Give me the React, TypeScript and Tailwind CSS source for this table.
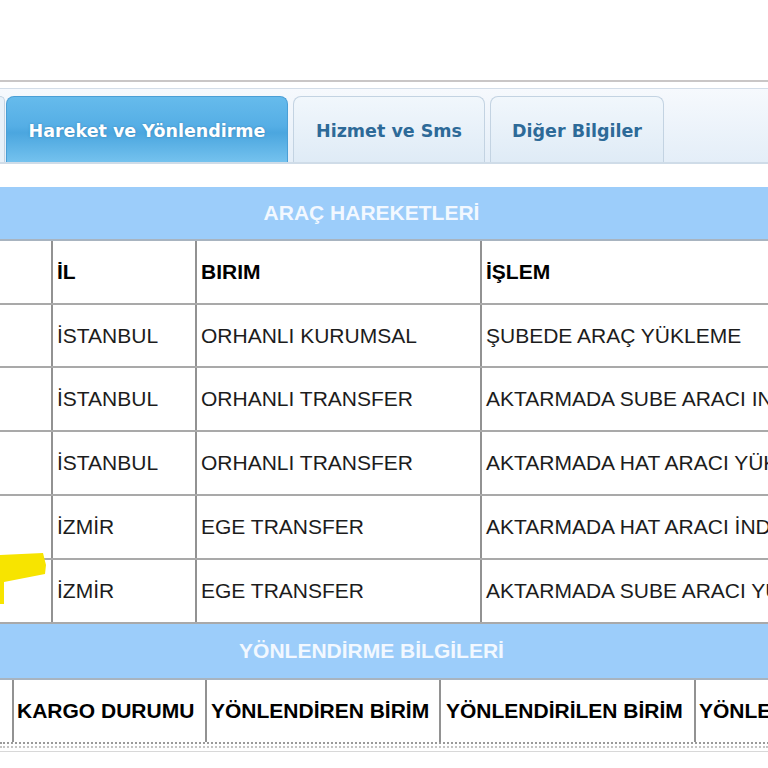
const arial = { fontFamily: '"Liberation Sans", Arial, sans-serif' };

const moves = [
	["İSTANBUL", "ORHANLI KURUMSAL", "ŞUBEDE ARAÇ YÜKLEME"],
	["İSTANBUL", "ORHANLI TRANSFER", "AKTARMADA SUBE ARACI INDIRME"],
	["İSTANBUL", "ORHANLI TRANSFER", "AKTARMADA HAT ARACI YÜKLEME"],
	["İZMİR", "EGE TRANSFER", "AKTARMADA HAT ARACI İNDİRME"],
	["İZMİR", "EGE TRANSFER", "AKTARMADA SUBE ARACI YÜKLEME"],
];

const rowHeights = ["h-[63px]", "h-[64px]", "h-[64px]", "h-[64px]", "h-[64px]"];

function Tab({ label, active, width }: { label: string; active?: boolean; width: string }) {
	return (
		<div
			className={`${width} h-[66px] pt-[3px] flex items-center justify-center rounded-t-[8px] border border-b-0 text-[17.5px] font-bold ${
				active
					? "border-[#4a9fd6] bg-[linear-gradient(#66bbec,#55aee5_45%,#4ba6df_55%,#74c2ee)] text-white [text-shadow:0_0_2px_rgba(30,90,140,0.5)]"
					: "border-[#c3d3e2] bg-[linear-gradient(#f1f7fc,#dfebf6)] text-[#2d6a98]"
			}`}
			style={{ fontFamily: '"DejaVu Sans", Verdana, sans-serif' }}
		>
			{label}
		</div>
	);
}

function SectionHeader({ title, className }: { title: string; className: string }) {
	return (
		<div className={`${className} bg-[#9ccdfa] flex items-center border-b-2 border-[#a8b4c0]`}>
			<div className="w-[743px] text-center text-[21px] font-bold text-[#f2f8ff]" style={arial}>
				{title}
			</div>
		</div>
	);
}

export default function App() {
	return (
		<div className="relative w-[768px] h-[768px] overflow-hidden bg-white" style={arial}>
			<div className="h-[80px]" />
			<div className="h-[2px] bg-[#c9c6c6]" />
			<div className="h-[6px]" />

			{/* tab strip */}
			<div className="h-[76px] border-t border-b-2 border-t-[#d3dde8] border-b-[#cfdce8] bg-[linear-gradient(#f6f9fd,#e4eef8)] flex items-end">
				<div className="w-[5px] h-[66px] rounded-tr-[6px] border-r border-t border-[#c3d3e2] bg-[#e8f1f9]" />
				<div className="ml-[1px]">
					<Tab label="Hareket ve Yönlendirme" active width="w-[282px]" />
				</div>
				<div className="ml-[5px]">
					<Tab label="Hizmet ve Sms" width="w-[192px]" />
				</div>
				<div className="ml-[5px]">
					<Tab label="Diğer Bilgiler" width="w-[174px]" />
				</div>
			</div>

			<div className="h-[23px]" />

			<SectionHeader title="ARAÇ HAREKETLERİ" className="h-[54px]" />

			<div className="w-[1100px]">
				<div className="h-[64px] grid grid-cols-[53px_144px_285px_618px] border-b-2 border-[#a9a9a9] text-[21px] font-bold text-black">
					<div className="border-r-2 border-[#929292]" />
					<div className="border-r-2 border-[#929292] flex items-center pl-[4px]">İL</div>
					<div className="border-r-2 border-[#929292] flex items-center pl-[4px]">BIRIM</div>
					<div className="flex items-center pl-[4px]">İŞLEM</div>
				</div>
				{moves.map((m, i) => (
					<div
						key={i}
						className={`${rowHeights[i]} grid grid-cols-[53px_144px_285px_618px] border-b-2 border-[#a9a9a9] text-[21px] text-[#1c1c1c]`}
					>
						<div className="border-r-2 border-[#929292]" />
						<div className="border-r-2 border-[#929292] flex items-center pl-[4px]">{m[0]}</div>
						<div className="border-r-2 border-[#929292] flex items-center pl-[4px]">{m[1]}</div>
						<div className="flex items-center pl-[4px] whitespace-nowrap">{m[2]}</div>
					</div>
				))}
			</div>

			<SectionHeader title="YÖNLENDİRME BİLGİLERİ" className="h-[56px]" />

			<div className="w-[1100px] h-[64px] grid grid-cols-[14px_193px_234px_255px_404px] border-b-2 border-dotted border-[#9a9a9a] text-[21px] font-bold text-black">
				<div className="border-r-2 border-[#929292]" />
				<div className="border-r-2 border-[#929292] flex items-center pl-[3px] whitespace-nowrap">KARGO DURUMU</div>
				<div className="border-r-2 border-[#929292] flex items-center pl-[4px] whitespace-nowrap">YÖNLENDİREN BİRİM</div>
				<div className="border-r-2 border-[#929292] flex items-center pl-[5px] whitespace-nowrap">YÖNLENDİRİLEN BİRİM</div>
				<div className="flex items-center pl-[3px] whitespace-nowrap">YÖNLENDİRME TARİHİ</div>
			</div>
			<div className="mt-[2px] h-[2px] border-b-2 border-dotted border-[#c4c4c4]" />
			<div className="mt-[3px] h-[1px] bg-[#d8d8d8]" />

			{/* yellow marker over the first column */}
			<svg className="absolute left-0 top-[552px]" width="48" height="54" viewBox="0 0 48 54">
				<polygon points="0,3 43,1 46,13 45,22 4,30 4,52 0,52" fill="#f7e400" />
			</svg>
		</div>
	);
}
